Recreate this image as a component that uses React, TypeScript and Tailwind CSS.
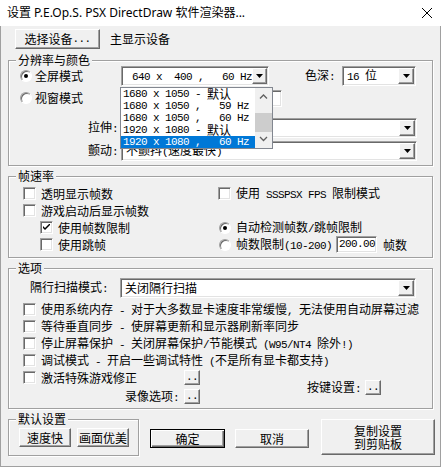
import React from "react";

// classic win32 3D edges
const raised =
  "bg-[#f0f0f0] border border-white border-r-[#696969] border-b-[#696969] shadow-[inset_-1px_-1px_0_#a0a0a0]";
const sunken =
  "bg-white border border-[#a0a0a0] border-r-white border-b-white shadow-[inset_1px_1px_0_#696969,inset_-1px_-1px_0_#e3e3e3]";
// ascii in the dialog font is 6px per char
const mono = "font-['Liberation_Mono','Noto_Sans_CJK_SC',monospace] text-[11px] tracking-[-0.6px] whitespace-pre";

// wraps ascii runs in the narrow mono font, leaves the chinese as is
function T({ children }: { children: string }) {
    const parts = children.split(/([\x20-\x7e]+)/);
    return (
        <>
            {parts.map((p, i) =>
                /^[\x20-\x7e]+$/.test(p) ? (
                    <span key={i} className={mono}>
                        {p}
                    </span>
                ) : (
                    p
                )
            )}
        </>
    );
}

function Btn({ children, className = "" }: { children?: React.ReactNode; className?: string }) {
    return <div className={`flex items-center justify-center ${raised} ${className}`}>{children}</div>;
}

function Tri() {
    return (
        <svg width="7" height="4" viewBox="0 0 7 4">
            <polygon points="0,0 7,0 3.5,4" fill="#000" />
        </svg>
    );
}

function Combo({ value, className = "" }: { value: string; className?: string }) {
    return (
        <div className={`${sunken} flex items-center p-[1px] ${className}`}>
            <span className="flex-1 pl-[3px] whitespace-pre">
                <T>{value}</T>
            </span>
            <Btn className="w-[16px] h-full">
                <Tri />
            </Btn>
        </div>
    );
}

function Check({ checked = false }: { checked?: boolean }) {
    return (
        <div className={`${sunken} w-[13px] h-[13px] shrink-0 flex items-center justify-center`}>
            {checked && (
                <svg width="7" height="7" viewBox="0 0 7 7">
                    <path d="M0 2 L0 4 L2 6 L7 1 L7 -1 L2 4 Z" fill="#000" />
                </svg>
            )}
        </div>
    );
}

function Radio({ checked = false }: { checked?: boolean }) {
    return (
        <div className="w-[12px] h-[12px] shrink-0 rounded-full bg-white border border-[#a0a0a0] border-r-white border-b-white shadow-[inset_1px_1px_0_#696969] flex items-center justify-center">
            {checked && <div className="w-[4px] h-[4px] rounded-full bg-black" />}
        </div>
    );
}

function Group({ title, className = "", children }: { title: string; className?: string; children?: React.ReactNode }) {
    return (
        <div className={`relative border border-[#a0a0a0] shadow-[inset_1px_1px_0_#fff,1px_1px_0_#fff] ${className}`}>
            <span className="absolute left-[7px] top-[-8px] bg-[#f0f0f0] px-[2px] leading-[14px]">{title}</span>
            {children}
        </div>
    );
}

function CheckRow({ label, checked, className = "" }: { label: string; checked?: boolean; className?: string }) {
    return (
        <div className={`flex items-center h-[17px] ${className}`}>
            <Check checked={checked} />
            <span className="ml-[5px] whitespace-pre">
                <T>{label}</T>
            </span>
        </div>
    );
}

function Dots() {
    return <Btn className={`w-[16px] h-[15px] items-end pb-[1px] ${mono}`}>..</Btn>;
}

const resolutions = [
    "1680 x 1050 - 默认",
    "1680 x 1050 ,   59 Hz",
    "1680 x 1050 ,   60 Hz",
    "1920 x 1080 - 默认",
    "1920 x 1080 ,   60 Hz",
];

export default function App() {
    return (
        <div className="w-[443px] h-[467px] bg-white font-['Noto_Sans_CJK_SC','Noto_Sans',sans-serif] text-[12px] leading-none text-black flex flex-col">
            {/* title bar */}
            <div className="h-[26px] shrink-0 bg-white flex items-center pl-[7px] pr-[11px]">
                <span className="flex-1 font-['Noto_Sans','Noto_Sans_CJK_SC',sans-serif]">设置 P.E.Op.S. PSX DirectDraw 软件渲染器...</span>
                <svg width="10" height="10" viewBox="0 0 10 10">
                    <path d="M0 0 L10 10 M10 0 L0 10" stroke="#000" strokeWidth="1" />
                </svg>
            </div>

            <div className="w-[441px] flex-1 bg-[#f0f0f0] border-l border-r border-b border-[#a0a0a0] flex flex-col">
                <div className="flex items-center mt-[3px] pl-[14px]">
                    <Btn className="w-[85px] h-[20px]">
                        <T>选择设备...</T>
                    </Btn>
                    <span className="ml-[10px]">主显示设备</span>
                </div>

                {/* resolution & colour */}
                <Group title="分辨率与颜色" className="mt-[11px] ml-[7px] w-[425px] h-[106px] shrink-0">
                    <div className="flex items-center h-[20px] mt-[5px] pl-[11px]">
                        <div className="w-[101px] flex items-center">
                            <Radio checked />
                            <span className="ml-[3px]">全屏模式</span>
                        </div>
                        <Combo value=" 640 x  400 ,   60 Hz" className="w-[148px] h-[20px]" />
                        <span className="ml-[36px] w-[37px]">
                            <T>色深:</T>
                        </span>
                        <Combo value="16 位" className="w-[74px] h-[20px]" />
                    </div>
                    <div className="flex items-center h-[20px] mt-[2px] pl-[11px]">
                        <div className="w-[101px] flex items-center">
                            <Radio />
                            <span className="ml-[3px]">视窗模式</span>
                        </div>
                        <div className={`${sunken} ml-[111px] w-[50px] h-[17px]`} />
                    </div>
                    <div className="flex items-center h-[20px] mt-[10px] pl-[11px]">
                        <span className="w-[101px] text-right pr-[3px]">
                            <T>拉伸:</T>
                        </span>
                        <Combo value="" className="w-[296px] h-[20px]" />
                    </div>
                    <div className="flex items-center h-[20px] mt-[3px] pl-[11px]">
                        <span className="w-[101px] text-right pr-[3px]">
                            <T>颤动:</T>
                        </span>
                        <Combo value="不颤抖(速度最快)" className="w-[296px] h-[20px]" />
                    </div>

                    {/* open resolution list */}
                    <div className="absolute left-[111px] top-[26px] w-[153px] h-[62px] bg-white border border-[#828790] flex">
                        <div className="flex-1 flex flex-col">
                            {resolutions.map((r, i) => (
                                <div
                                    key={r}
                                    className={`h-[12px] flex items-center pl-[2px] whitespace-pre ${i === 4 ? "bg-[#0078d7] text-white" : ""}`}
                                >
                                    <T>{r}</T>
                                </div>
                            ))}
                        </div>
                        <div className="w-[17px] bg-[#f0f0f0] flex flex-col items-center">
                            <svg width="9" height="17" viewBox="0 0 9 17" className="shrink-0">
                                <path d="M1 10.5 L4.5 7 L8 10.5" stroke="#606060" strokeWidth="1.3" fill="none" />
                            </svg>
                            <div className="w-[17px] h-[19px] mt-[8px] bg-[#cdcdcd]" />
                            <svg width="9" height="16" viewBox="0 0 9 16" className="mt-auto shrink-0">
                                <path d="M1 5 L4.5 8.5 L8 5" stroke="#606060" strokeWidth="1.3" fill="none" />
                            </svg>
                        </div>
                    </div>
                </Group>

                {/* frame rate */}
                <Group title="帧速率" className="mt-[10px] ml-[7px] w-[425px] h-[82px] shrink-0">
                    <div className="grid grid-cols-[195px_1fr] mt-[8px] pl-[14px]">
                        <CheckRow label="透明显示帧数" />
                        <CheckRow label="使用 SSSPSX FPS 限制模式" />
                        <CheckRow label="游戏启动后显示帧数" />
                        <div />
                        <CheckRow label="使用帧数限制" checked className="pl-[17px]" />
                        <div className="flex items-center h-[17px] pl-[1px]">
                            <Radio checked />
                            <span className="ml-[5px]">
                                <T>自动检测帧数/跳帧限制</T>
                            </span>
                        </div>
                        <CheckRow label="使用跳帧" className="pl-[17px]" />
                        <div className="flex items-center h-[17px] pl-[1px]">
                            <Radio />
                            <span className="ml-[5px]">
                                <T>帧数限制(10-200)</T>
                            </span>
                            <div className={`${sunken} ml-[4px] w-[41px] h-[17px] flex items-center pl-[2px] ${mono}`}>200.00</div>
                            <span className="ml-[6px]">帧数</span>
                        </div>
                    </div>
                </Group>

                {/* options */}
                <Group title="选项" className="mt-[10px] ml-[7px] w-[425px] h-[141px] shrink-0">
                    <div className="flex items-center h-[20px] mt-[9px] pl-[21px]">
                        <span className="w-[90px]">
                            <T>隔行扫描模式:</T>
                        </span>
                        <Combo value="关闭隔行扫描" className="w-[296px] h-[20px]" />
                    </div>
                    <div className="flex flex-col mt-[3px] pl-[14px]">
                        <CheckRow label="使用系统内存 - 对于大多数显卡速度非常缓慢, 无法使用自动屏幕过滤" />
                        <CheckRow label="等待垂直同步 - 使屏幕更新和显示器刷新率同步" />
                        <CheckRow label="停止屏幕保护 - 关闭屏幕保护/节能模式 (W95/NT4 除外!)" />
                        <CheckRow label="调试模式 - 开启一些调试特性 (不是所有显卡都支持)" />
                        <div className="flex">
                            <div className="w-[177px] flex flex-col">
                                <div className="flex items-center justify-between h-[17px]">
                                    <div className="flex items-center">
                                        <Check />
                                        <span className="ml-[5px]">激活特殊游戏修正</span>
                                    </div>
                                    <Dots />
                                </div>
                                <div className="flex items-center justify-end mt-[3px] h-[15px]">
                                    <span className="mr-[5px]">
                                        <T>录像选项:</T>
                                    </span>
                                    <Dots />
                                </div>
                            </div>
                            <div className="ml-[107px] mt-[11px] flex items-center h-[15px]">
                                <span className="mr-[4px]">
                                    <T>按键设置:</T>
                                </span>
                                <Dots />
                            </div>
                        </div>
                    </div>
                </Group>

                {/* bottom row */}
                <div className="flex items-start mt-[10px] ml-[7px]">
                    <Group title="默认设置" className="w-[131px] h-[37px] shrink-0">
                        <div className="flex gap-[6px] mt-[8px] pl-[10px]">
                            <Btn className="w-[52px] h-[19px]">速度快</Btn>
                            <Btn className="w-[52px] h-[19px]">画面优美</Btn>
                        </div>
                    </Group>
                    <div className="mt-[10px] ml-[11px] w-[75px] h-[19px] flex items-center justify-center bg-[#f0f0f0] border border-black shadow-[inset_1px_1px_0_#fff,inset_-1px_-1px_0_#696969,inset_-2px_-2px_0_#a0a0a0]">
                        确定
                    </div>
                    <Btn className="mt-[10px] ml-[10px] w-[74px] h-[19px]">取消</Btn>
                    <Btn className="ml-[12px] w-[114px] h-[36px] flex-col leading-[13px]">
                        <span>复制设置</span>
                        <span>到剪贴板</span>
                    </Btn>
                </div>
            </div>
        </div>
    );
}
